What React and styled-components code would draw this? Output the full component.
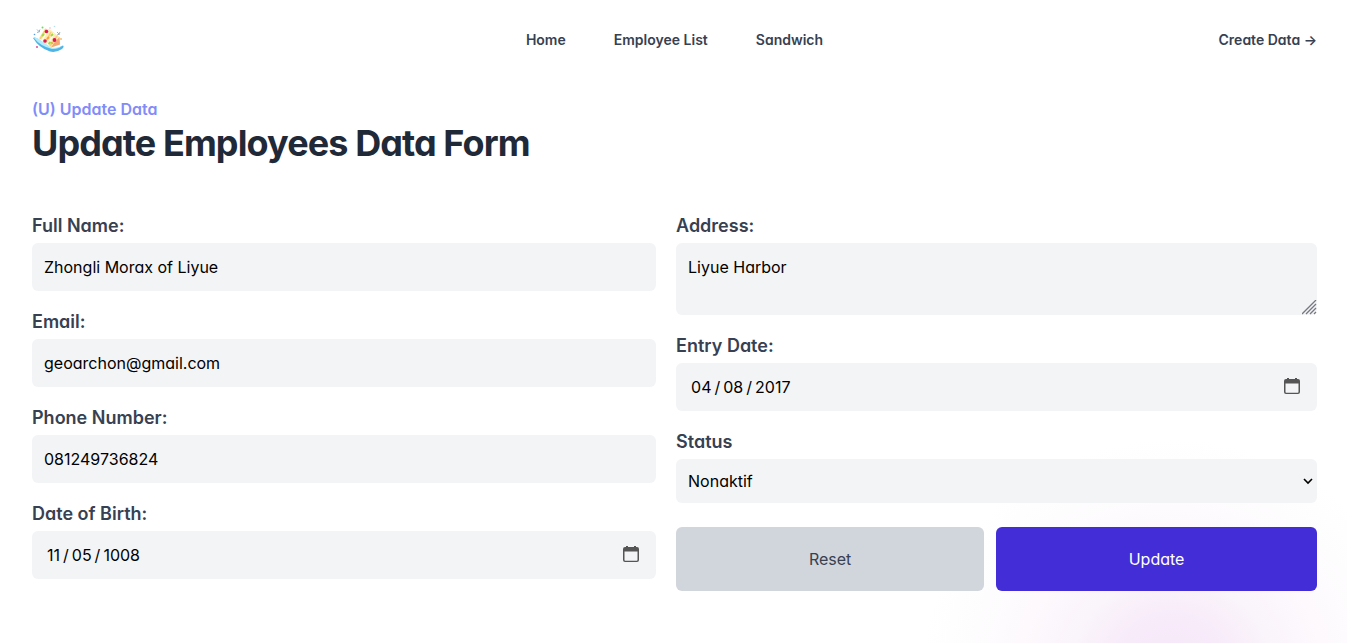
import React from "react";
import styled, { createGlobalStyle } from "styled-components";

const svgUrl = (width, height, body) =>
  `url("data:image/svg+xml,${encodeURIComponent(
    `<svg xmlns="http://www.w3.org/2000/svg" width="${width}" height="${height}" viewBox="0 0 ${width} ${height}">${body}</svg>`
  )}")`;

const calendarIcon = svgUrl(
  16,
  16,
  '<path d="M3 0h2v1h6V0h2v1h1q2 0 2 2v11q0 2-2 2H2q-2 0-2-2V3q0-2 2-2h1zM1.500 5.500V14q0 .7.7.7h11.600q.7 0 .7-.7V5.500z" fill="#555555" fill-rule="evenodd"/>'
);

const chevronIcon = svgUrl(
  10,
  7,
  '<path d="M1 1l4 4 4-4" fill="none" stroke="#000000" stroke-width="1.6"/>'
);

const gripIcon = svgUrl(
  15,
  15,
  '<path d="M0 14L14 0M4 14L14 4M8 14L14 8M12 14L14 12" fill="none" stroke="#777780" stroke-width="1.300"/>'
);

const GlobalStyle = createGlobalStyle`
  *, *::before, *::after { box-sizing: border-box; }
  body {
    margin: 0;
    background: #ffffff;
    color: #374151;
    font-family: Inter, "Noto Sans", sans-serif;
    font-feature-settings: "cv11";
    font-size: 16px;
    line-height: 24px;
  }
`;

const Page = styled.div`
  min-height: 100vh;
  padding: 0 30px 52px 32px;
  background: radial-gradient(
    ellipse 250px 230px at 87% 104%,
    #f6e7f8 0%,
    #f7eaf9 20%,
    #faf4fb 40%,
    #fdf9fd 60%,
    #fefdfe 80%,
    #ffffff 100%
  ) no-repeat;
`;

const Header = styled.header`
  display: grid;
  grid-template-columns: 1fr auto 1fr;
  align-items: center;
  padding: 24px 0;
`;

const HomeLink = styled.a`
  display: block;
  width: 32px;
  height: 32px;

  svg { display: block; }
`;

const Nav = styled.nav`
  display: flex;
  gap: 48px;
`;

const NavLink = styled.a`
  justify-self: ${(p) => (p.$end ? "end" : "auto")};
  color: #374151;
  font-size: 14px;
  font-weight: 600;
  line-height: 24px;
  text-decoration: none;
`;

const Intro = styled.div`
  padding: 17px 0 46px;
`;

const Eyebrow = styled.p`
  margin: 0;
  color: #818cf8;
  font-weight: 600;
`;

const Title = styled.h1`
  margin: 0;
  color: #1f2937;
  font-size: 36px;
  font-weight: 700;
  line-height: 44px;
  letter-spacing: -0.025em;
`;

const Form = styled.form`
  display: grid;
  grid-template-columns: 37fr 38fr;
  gap: 20px;
`;

const Column = styled.div`
  display: flex;
  flex-direction: column;
  gap: 16px;
  min-width: 0;
`;

const Field = styled.div`
  display: flex;
  flex-direction: column;
  gap: 2px;
`;

const Label = styled.label`
  color: #374151;
  font-size: 18px;
  font-weight: 600;
  line-height: 30px;
`;

const Input = styled.input`
  display: block;
  width: 100%;
  height: 48px;
  padding: 12px;
  border: 0;
  border-radius: 6px;
  background: #f3f4f6;
  color: #000000;
  font: inherit;
  font-feature-settings: inherit;
`;

const DateInput = styled(Input)`
  &::-webkit-datetime-edit {
    padding-left: 2px;
  }

  &::-webkit-datetime-edit-text {
    padding: 0 2px;
  }

  &::-webkit-calendar-picker-indicator {
    width: 16px;
    height: 16px;
    margin: 0 5px 2px 24px;
    padding: 0;
    background: ${calendarIcon} center / 16px 16px no-repeat;
  }
`;

const TextArea = styled(Input)`
  height: auto;
  resize: vertical;

  &::-webkit-resizer {
    background: ${gripIcon} left top / 15px 15px no-repeat;
  }
`;

const Select = styled(Input)`
  height: 44px;
  appearance: none;
  padding: 8px 24px 8px 12px;
  background: #f3f4f6 ${chevronIcon} right 4px center / 10px 7px no-repeat;
`;

const Actions = styled.div`
  display: grid;
  grid-template-columns: 24fr 25fr;
  gap: 12px;
  padding-top: 8px;
`;

const Button = styled.button`
  height: 64px;
  border: 0;
  border-radius: 6px;
  background: ${(p) => (p.$primary ? "#432dd7" : "#d1d5dc")};
  color: ${(p) => (p.$primary ? "#ffffff" : "#374151")};
  font: inherit;
  font-feature-settings: inherit;
`;

function Logo() {
  return (
    <svg width="32" height="32" viewBox="0 0 32 32" aria-hidden="true">
      <path d="M1 14Q3 12.500 6 15L19 24Q25 25 31 21.500Q32.500 23 30 25Q24 29 18 27.500Q7 24 1 14Z" fill="#4fb4e6" />
      <path d="M2 14Q4 13 7 15L19 23.500Q25 24.500 30 22Q27 25 20 25Q8 22 2 14Z" fill="#b5ebfa" />
      <path d="M7 14L13 4.500L18 5.500L27.500 13L28 20.500L19 23.500Z" fill="#fdebb0" />
      <path d="M19 23.500L22 19L27.500 13L28 20.500Z" fill="#f5a673" />
      <path d="M8 15L14 5M13 19L19 8M18 22L25 12" fill="none" stroke="#f9cc80" strokeWidth="1.500" />
      <path d="M10 16.500L16 6M15.500 20.500L22 9.500" fill="none" stroke="#fffdf4" strokeWidth="1.500" />
      <circle cx="14.500" cy="7.500" r="1.800" fill="#d7195b" />
      <circle cx="22.500" cy="16" r="1.900" fill="#d7195b" />
      <circle cx="13" cy="17" r="1.800" fill="#d7195b" />
      <path d="M10 12l2-2M19 12l2-2M16.500 20l2-2" stroke="#a0dc3c" strokeWidth="2" />
      <path d="M15 15l2-2M19.500 19.500l1-1" stroke="#f8a33a" strokeWidth="2" />
      <path d="M5 5.500l2 2 1-2M5 8.500l3-1M25 8l2 2 1-2M25 11l3-1" fill="none" stroke="#91a9bc" strokeWidth="0.900" />
      <circle cx="10.500" cy="3.500" r="1" fill="#77d462" />
      <circle cx="18" cy="4" r="0.800" fill="#f6b2c7" />
      <circle cx="22.500" cy="2.500" r="0.800" fill="#b7e1ef" />
      <circle cx="2.500" cy="10.500" r="0.800" fill="#5a9cdb" />
      <circle cx="5" cy="23" r="1" fill="#e04898" />
      <circle cx="29" cy="15" r="0.900" fill="#f5b760" />
    </svg>
  );
}

function FormField({ id, label, children }) {
  return (
    <Field>
      <Label htmlFor={id}>{label}</Label>
      {children}
    </Field>
  );
}

export default function App() {
  return (
    <>
      <GlobalStyle />
      <Page>
        <Header>
          <HomeLink href="#" aria-label="Home page"><Logo /></HomeLink>
          <Nav>
            <NavLink href="#">Home</NavLink>
            <NavLink href="#">Employee List</NavLink>
            <NavLink href="#">Sandwich</NavLink>
          </Nav>
          <NavLink href="#" $end>Create Data →</NavLink>
        </Header>
        <main>
          <Intro>
            <Eyebrow>(U) Update Data</Eyebrow>
            <Title>Update Employees Data Form</Title>
          </Intro>
          <Form>
            <Column>
              <FormField id="name" label="Full Name:">
                <Input id="name" type="text" defaultValue="Zhongli Morax of Liyue" />
              </FormField>
              <FormField id="email" label="Email:">
                <Input id="email" type="email" defaultValue="geoarchon@gmail.com" />
              </FormField>
              <FormField id="phone" label="Phone Number:">
                <Input id="phone" type="tel" defaultValue="081249736824" />
              </FormField>
              <FormField id="birth" label="Date of Birth:">
                <DateInput id="birth" type="date" defaultValue="1008-11-05" />
              </FormField>
            </Column>
            <Column>
              <FormField id="address" label="Address:">
                <TextArea as="textarea" id="address" rows={2} defaultValue="Liyue Harbor" />
              </FormField>
              <FormField id="entry" label="Entry Date:">
                <DateInput id="entry" type="date" defaultValue="2017-04-08" />
              </FormField>
              <FormField id="status" label="Status">
                <Select as="select" id="status" defaultValue="Nonaktif">
                  <option>Aktif</option>
                  <option>Nonaktif</option>
                </Select>
              </FormField>
              <Actions>
                <Button type="reset">Reset</Button>
                <Button type="submit" $primary>Update</Button>
              </Actions>
            </Column>
          </Form>
        </main>
      </Page>
    </>
  );
}
